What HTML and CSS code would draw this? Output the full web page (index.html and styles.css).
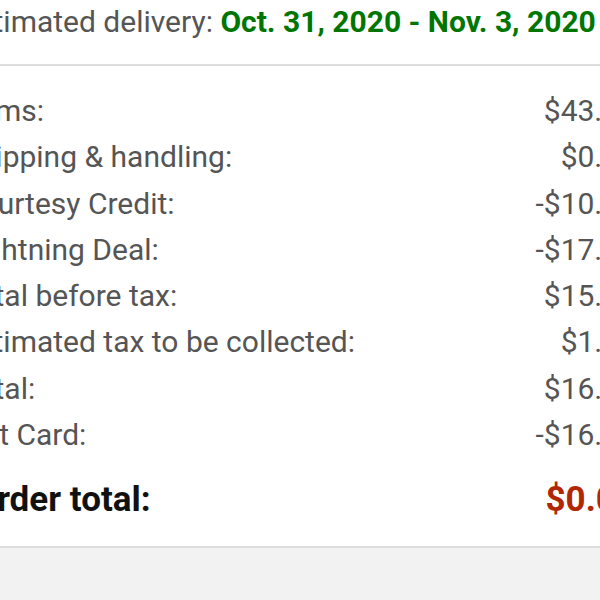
FILE: index.html
```html
<!DOCTYPE html>
<html>
<head>
<meta charset="utf-8">
<link rel="stylesheet" href="styles.css">
</head>
<body>
<div class="page">
  <section class="delivery">
    <span class="label">Estimated delivery:</span>
    <span class="date">Oct. 31, 2020 - Nov. 3, 2020</span>
  </section>
  <section class="summary">
    <div class="row"><span>Items:</span><span>$43.49</span></div>
    <div class="row"><span>Shipping &amp; handling:</span><span>$0.00</span></div>
    <div class="row"><span>Courtesy Credit:</span><span>-$10.50</span></div>
    <div class="row"><span>Lightning Deal:</span><span>-$17.50</span></div>
    <div class="row"><span>Total before tax:</span><span>$15.49</span></div>
    <div class="row"><span>Estimated tax to be collected:</span><span>$1.01</span></div>
    <div class="row"><span>Total:</span><span>$16.50</span></div>
    <div class="row"><span>Gift Card:</span><span>-$16.50</span></div>
    <div class="row total"><span>Order total:</span><span class="price">$0.00</span></div>
  </section>
  <section class="rest"></section>
</div>
</body>
</html>
```
FILE: styles.css
```css
html, body {
  margin: 0;
  padding: 0;
  width: 600px;
  height: 600px;
  overflow: hidden;
  background: #f2f2f2;
}
.page {
  margin-left: -39px;
  width: 675px;
  font-family: Roboto, "Liberation Sans", sans-serif;
  color: #555;
}
.delivery {
  background: #fff;
  height: 66px;
  box-sizing: border-box;
  font-size: 30px;
  line-height: 44px;
  border-bottom: 2px solid #ddd;
  white-space: nowrap;
  margin-right: -60px;
}
.delivery .date {
  color: #007600;
  font-weight: bold;
}
.summary {
  background: #fff;
  padding: 22px 60px 23px 0;
  border-bottom: 2px solid #ddd;
  margin-right: -60px;
}
.row {
  display: flex;
  justify-content: space-between;
  font-size: 30px;
  line-height: 46.3px;
  white-space: nowrap;
}
.row.total {
  margin-top: 19px;
  padding-left: 12px;
  font-size: 35px;
  line-height: 46px;
  font-weight: bold;
  color: #111;
}
.row.total .price {
  color: #b12704;
}
.rest {
  height: 60px;
}
```
